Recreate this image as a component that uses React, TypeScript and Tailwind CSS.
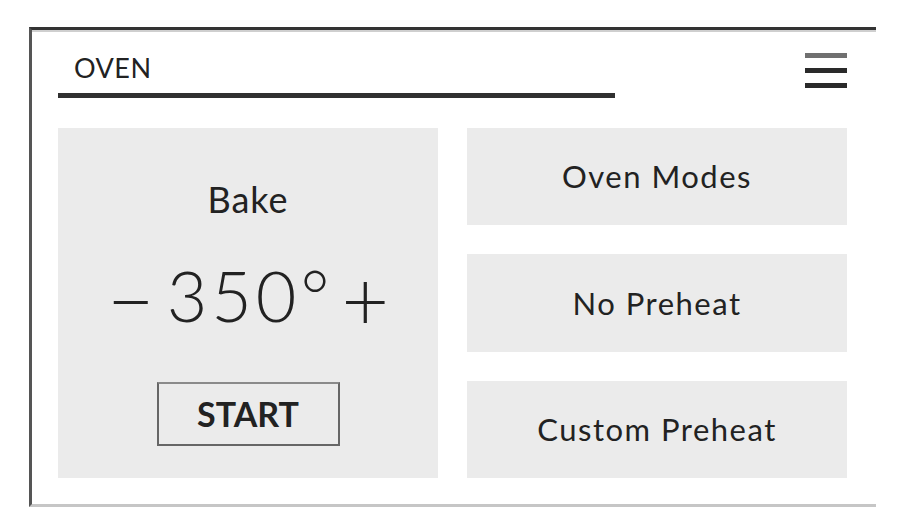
import React from "react";

export default function App() {
  const font = { fontFamily: "Lato, 'Open Sans', sans-serif" };
  return (
    <div className="w-[922px] h-[521px] bg-white overflow-hidden" style={font}>
      <div className="ml-[29px] mt-[27px] w-[847px] h-[480px] border-l-[3px] border-l-[#555555] border-t-[3px] border-t-[#333333] border-b-[3px] border-b-[#c6c6c6] shadow-[inset_0_2px_0_#cfcfcf] pl-[26px] pr-[29px] text-[#222222]">
        {/* header */}
        <div className="flex justify-between items-start pt-[22px]">
          <div>
            <div className="pl-[16px] text-[27px] leading-[32px] tracking-[0.5px]">OVEN</div>
            <div className="mt-[9px] w-[557px] h-[5px] bg-[#303030]" />
          </div>
          <div className="flex flex-col gap-[10px] w-[42px] pt-[1px]">
            <div className="h-[5px] bg-[#707070]" />
            <div className="h-[5px] bg-[#2a2a2a]" />
            <div className="h-[5px] bg-[#2a2a2a]" />
          </div>
        </div>

        {/* content */}
        <div className="mt-[30px] grid grid-cols-2 gap-[29px] h-[350px]">
          <div className="bg-[#ebebeb] flex flex-col items-center pt-[49px]">
            <div className="text-[36px] leading-[44px] tracking-[1px]">Bake</div>
            <div className="mt-[34px] h-[80px] flex items-center gap-[12px] font-light">
              <span className="text-[82px] leading-[80px] pt-[6px]">−</span>
              <span className="text-[70px] leading-[80px] tracking-[4px] -mr-[4px]">350°</span>
              <span className="text-[82px] leading-[80px] pt-[6px]">+</span>
            </div>
            <div className="mt-[47px] w-[183px] h-[64px] border-2 border-[#666666] border-t-[#8a8a8a] flex items-center justify-center text-[34px] font-bold leading-none">
              START
            </div>
          </div>
          <div className="flex flex-col gap-[29px]">
            {["Oven Modes", "No Preheat", "Custom Preheat"].map((t) => (
              <div
                key={t}
                className="flex-1 bg-[#ebebeb] flex items-center justify-center text-[31px] tracking-[1.5px]"
              >
                {t}
              </div>
            ))}
          </div>
        </div>
      </div>
    </div>
  );
}
